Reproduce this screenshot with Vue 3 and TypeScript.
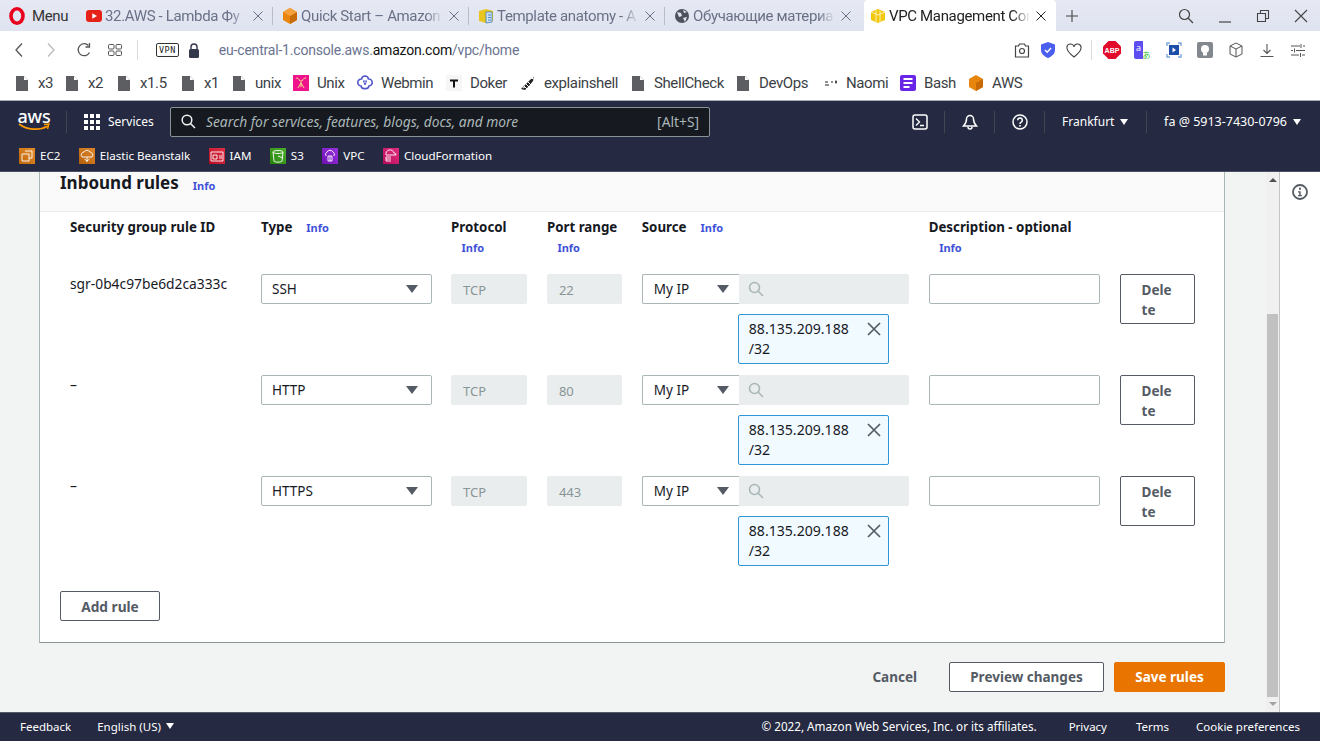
<template>
  <div class="page">
    <div class="tabbar">
      <div class="menu">
        <svg width="16" height="18" viewBox="0 0 16 18"><ellipse cx="8" cy="9" rx="6" ry="7.2" fill="none" stroke="#e8001c" stroke-width="3.6" /></svg>
        <span>Menu</span>
      </div>
      <div v-for="t in tabs" :key="t.title" class="tab" :class="{ active: t.active }">
        <svg class="tab-ico" width="16" height="16" viewBox="0 0 16 16">
          <template v-if="t.icon === 'yt'">
            <rect x="0" y="2" width="16" height="12" rx="3" fill="#e62117" />
            <path d="M6.3 5.2 11 8l-4.7 2.8z" fill="#fff" />
          </template>
          <template v-else-if="t.icon === 'cube'">
            <path d="M8 0 15 4v8l-7 4-7-4V4z" fill="#e8850c" />
            <path d="M8 8l7-4v8l-7 4z" fill="#c76a08" />
            <path d="M8 0 15 4 8 8 1 4z" fill="#f5a03a" />
          </template>
          <template v-else-if="t.icon === 'doc'">
            <path d="M1 3 8 1l7 2v10l-7 2-7-2z" fill="#e8c51e" />
            <path d="M8 4h6v10l-6 1z" fill="#cfe1f2" stroke="#3b7dbd" stroke-width=".8" />
            <path d="M10 7h3M10 9.500h3M10 12h3" stroke="#3b7dbd" stroke-width=".9" />
          </template>
          <template v-else-if="t.icon === 'globe'">
            <circle cx="8" cy="8" r="7" fill="#4d5260" />
            <path d="M3 4l4 1 1 3-3 1zM9 10l4-1-2 5zM9 2l4 2-3 1z" fill="#e3e7f2" />
          </template>
          <template v-else>
            <path d="M8 1 15 4v8l-7 3-7-3V4z" fill="#f2c80f" />
            <path d="M6 2.500v12.300M10 2.500v12.300M1 4l7 3 7-3" stroke="#fff6c4" stroke-width=".9" fill="none" />
          </template>
        </svg>
        <span class="tab-title">{{ t.title }}</span>
        <svg class="tab-x" width="10" height="10" viewBox="0 0 10 10"><path d="M.5.5l9 9M9.500.5l-9 9" stroke="currentColor" fill="none" /></svg>
      </div>
      <svg class="plus" width="12" height="12" viewBox="0 0 12 12"><path d="M6 0v12M0 6h12" stroke="#444" stroke-width="1.100" /></svg>
      <div class="win">
        <svg width="16" height="16" viewBox="0 0 16 16"><circle cx="6.500" cy="6.500" r="5" fill="none" stroke="#444" stroke-width="1.200" /><path d="M10 10l5 5" stroke="#444" stroke-width="1.200" /></svg>
        <svg width="14" height="14" viewBox="0 0 14 14"><path d="M1 13h12" stroke="#444" stroke-width="1.200" /></svg>
        <svg width="14" height="14" viewBox="0 0 14 14"><path d="M1.500 4.500h8v8h-8zM4.500 4.500v-3h8v8h-3" fill="none" stroke="#444" stroke-width="1.100" /></svg>
        <svg width="14" height="14" viewBox="0 0 14 14"><path d="M1 1l12 12M13 1 1 13" stroke="#444" stroke-width="1.100" /></svg>
      </div>
    </div>

    <div class="toolbar">
      <svg class="back" width="10" height="16" viewBox="0 0 10 16"><path d="M8 1.500 2 8l6 6.500" fill="none" stroke="#555" stroke-width="1.300" /></svg>
      <svg class="fwd" width="10" height="16" viewBox="0 0 10 16"><path d="M2 1.500 8 8l-6 6.500" fill="none" stroke="#bbb" stroke-width="1.300" /></svg>
      <svg class="reload" width="16" height="16" viewBox="0 0 16 16"><path d="M13.500 10.500A6 6 0 1 1 12.500 3.500" fill="none" stroke="#555" stroke-width="1.300" /><path d="M13.500 1v4h-4" fill="none" stroke="#555" stroke-width="1.300" /></svg>
      <svg class="apps" width="14" height="14" viewBox="0 0 14 14"><g fill="none" stroke="#555"><rect x=".5" y="1.500" width="5.500" height="4.500" rx="1" /><rect x="8" y="1.500" width="5.500" height="4.500" rx="1" /><rect x=".5" y="8" width="5.500" height="4.500" rx="1" /><rect x="8" y="8" width="5.500" height="4.500" rx="1" /></g></svg>
      <span class="sep"></span>
      <span class="vpn">VPN</span>
      <svg class="lock" width="12" height="15" viewBox="0 0 12 15"><path d="M3 6V4a3 3 0 0 1 6 0v2" fill="none" stroke="#33384a" stroke-width="1.400" /><rect x="1" y="6" width="10" height="9" rx="1.500" fill="#33384a" /></svg>
      <span class="url">eu-central-1.console.aws.<b>amazon.com</b>/vpc/home</span>
      <div class="tool-right">
        <span class="ti n"><svg width="16" height="15" viewBox="0 0 16 15"><path d="M1.500 3h3l1-2h5l1 2h3v11h-13z" fill="none" stroke="#444" stroke-width="1.200" /><circle cx="8" cy="8" r="2.500" fill="none" stroke="#444" stroke-width="1.200" /></svg></span>
        <span class="ti n"><svg width="14" height="16" viewBox="0 0 14 16"><path d="M7 0 14 2.500V8c0 4-3.500 6.500-7 8-3.500-1.500-7-4-7-8V2.500z" fill="#4a5ff0" /><path d="M4 8l2.200 2.200L10 6" fill="none" stroke="#fff" stroke-width="1.500" /></svg></span>
        <span class="ti n"><svg width="16" height="15" viewBox="0 0 16 15"><path d="M8 14C3 10 1 7.500 1 5a3.500 3.500 0 0 1 7-1 3.500 3.500 0 0 1 7 1c0 2.500-2 5-7 9z" fill="none" stroke="#444" stroke-width="1.100" /></svg></span>
        <span class="sep small"></span>
        <span class="ti"><svg width="18" height="18" viewBox="0 0 18 18"><path d="M5.500 0h7L18 5.500v7L12.500 18h-7L0 12.500v-7z" fill="#e30b2b" /><text x="9" y="11.800" text-anchor="middle" class="abp">ABP</text></svg></span>
        <span class="ti"><svg width="18" height="18" viewBox="0 0 18 18"><path d="M2 0h7v18H2a2 2 0 0 1-2-2V2a2 2 0 0 1 2-2z" fill="#5c4ef0" /><text x="4.500" y="10" text-anchor="middle" class="tr-a">a</text><text x="12.500" y="16.500" text-anchor="middle" class="tr-b">あ</text></svg></span>
        <span class="ti"><svg width="16" height="16" viewBox="0 0 16 16"><path d="M1 4V1h3M12 1h3v3M15 12v3h-3M4 15H1v-3" fill="none" stroke="#7ea7de" stroke-width="1.400" /><rect x="3" y="3" width="10" height="10" fill="#1e4fa8" /><path d="M6.500 5.500 10 8l-3.500 2.500z" fill="#fff" /></svg></span>
        <span class="ti"><svg width="16" height="16" viewBox="0 0 16 16"><rect width="16" height="16" rx="2" fill="#83878e" /><circle cx="8" cy="7" r="4" fill="#fff" /><rect x="6" y="10.500" width="4" height="3" fill="#fff" /></svg></span>
        <span class="ti"><svg width="14" height="16" viewBox="0 0 14 16"><path d="M7 1l6 3v8l-6 3-6-3V4zM1 4l6 3 6-3M7 7v8" fill="none" stroke="#555" /></svg></span>
        <span class="ti"><svg width="14" height="14" viewBox="0 0 14 14"><path d="M7 1v9M3.500 7 7 10.500 10.500 7M.5 13.500h13" fill="none" stroke="#555" stroke-width="1.100" /></svg></span>
        <span class="ti"><svg width="14" height="13" viewBox="0 0 14 13"><path d="M0 2h9M12 2h2M0 6.500h2M5 6.500h9M0 11h8M11 11h3M10 0v4M3.500 4.500v4M9.500 9v4" stroke="#555" fill="none" /></svg></span>
      </div>
    </div>

    <div class="bookmarks">
      <div v-for="b in bookmarks" :key="b.label" class="bm" :style="{ width: b.w + 'px' }">
        <svg width="16" height="16" viewBox="0 0 16 16">
          <template v-if="b.icon === 'doc'"><path d="M2 1h8l4 4v11H2z" fill="#5c5e62" /><path d="M10 1v4h4z" fill="#fff" /></template>
          <template v-else-if="b.icon === 'unix'"><rect width="16" height="16" fill="#f0148c" /><path d="M3 3c2 0 3 1 4 3M13 3c-2 0-3 1-4 3M8 5v7M8 8l-3 5M8 8l3 5" stroke="#f4e08c" fill="none" /></template>
          <template v-else-if="b.icon === 'webmin'"><path d="M8 1a3.500 3.500 0 0 1 3.400 3A3.500 3.500 0 0 1 12 11a3.500 3.500 0 0 1-4 2.500A3.500 3.500 0 0 1 4 11a3.500 3.500 0 0 1 .6-7A3.500 3.500 0 0 1 8 1z" fill="none" stroke="#5158cc" stroke-width="1.600" /><path d="M6 6l4 0M6.500 6 8 10l1.500-4" fill="none" stroke="#5158cc" /></template>
          <template v-else-if="b.icon === 'doker'"><rect width="16" height="16" fill="#f6f6f6" /><path d="M4 4.500h8v2H9v6H7v-6H4z" fill="#111" /></template>
          <template v-else-if="b.icon === 'shell'"><path d="M1 14 6 9l5-5 3-2-1 4-4 5-4 4z" fill="#222" /><path d="M4 11l3 3M6 9l3 3M8 7l3 3M3 13l2-1M11 3l3 1" stroke="#fff" /></template>
          <template v-else-if="b.icon === 'naomi'"><path d="M3 7h3M3 10h4M9 7h2M13 7h2M14 5.500v3" stroke="#222" stroke-width="1.200" /></template>
          <template v-else-if="b.icon === 'bash'"><rect width="16" height="16" rx="2" fill="#6a24e8" /><path d="M3.500 4h9M3.500 8h9M3.500 12h6" stroke="#fff" stroke-width="1.800" /></template>
          <template v-else><path d="M8 0 15 4v8l-7 4-7-4V4z" fill="#e8850c" /><path d="M8 8l7-4v8l-7 4z" fill="#c76a08" /></template>
        </svg>
        <span>{{ b.label }}</span>
      </div>
    </div>

    <header class="aws-nav">
      <div class="nav-top">
        <div class="logo">
          <span>aws</span>
          <svg width="32" height="9" viewBox="0 0 32 9"><path d="M1 1c8 6 20 7 29 2" fill="none" stroke="#f90" stroke-width="1.700" /><path d="M26 1.500l5-.5-1.500 5" fill="none" stroke="#f90" stroke-width="1.300" /></svg>
        </div>
        <span class="vline"></span>
        <div class="services">
          <svg width="16" height="16" viewBox="0 0 16 16" fill="#fff"><rect v-for="c in grid" :key="c.k" :x="c.x" :y="c.y" width="4" height="4" /></svg>
          <span>Services</span>
        </div>
        <div class="search">
          <svg width="15" height="15" viewBox="0 0 15 15"><circle cx="6" cy="6" r="4.800" fill="none" stroke="#f2f3f3" stroke-width="1.500" /><path d="M9.500 9.500 14 14" stroke="#f2f3f3" stroke-width="1.500" /></svg>
          <span class="ph">Search for services, features, blogs, docs, and more</span>
          <span class="hot">[Alt+S]</span>
        </div>
        <div class="nav-right">
          <div class="nav-ico-cell"><svg width="16" height="16" viewBox="0 0 16 16"><rect x="1" y="1" width="14" height="14" rx="2" fill="none" stroke="#fff" stroke-width="1.500" /><path d="M4 4.500 7.500 8 4 11.500M8 11.500h4" fill="none" stroke="#fff" stroke-width="1.300" /></svg></div>
          <div class="nav-ico-cell"><svg width="16" height="16" viewBox="0 0 16 16"><path d="M8 1.500a3.500 3.500 0 0 1 3.500 3.500c0 3 .5 4.500 3 7h-13c2.500-2.500 3-4 3-7A3.500 3.500 0 0 1 8 1.500z" fill="none" stroke="#fff" stroke-width="1.500" /><path d="M6 13a2 2 0 0 0 4 0" fill="none" stroke="#fff" stroke-width="1.500" /></svg></div>
          <div class="nav-ico-cell"><svg width="16" height="16" viewBox="0 0 16 16"><circle cx="8" cy="8" r="7" fill="none" stroke="#fff" stroke-width="1.500" /><path d="M5.700 6.200a2.300 2.300 0 1 1 3.500 2c-.9.500-1.200 1-1.200 1.800" fill="none" stroke="#fff" stroke-width="1.500" /><rect x="7.200" y="11" width="1.600" height="1.600" fill="#fff" /></svg></div>
          <div class="nav-txt region">Frankfurt<i class="caret"></i></div>
          <div class="nav-txt acct">fa @ 5913-7430-0796<i class="caret"></i></div>
        </div>
      </div>
      <div class="favs">
        <div v-for="(f, i) in favourites" :key="f.label" class="fav">
          <svg width="16" height="16" viewBox="0 0 16 16">
            <defs v-if="i === 0">
              <linearGradient id="fav-shade" x1="0" y1="1" x2="1" y2="0">
                <stop offset="0" stop-color="#000" stop-opacity=".18" />
                <stop offset="1" stop-color="#fff" stop-opacity=".12" />
              </linearGradient>
            </defs>
            <rect width="16" height="16" :fill="f.color" />
            <rect width="16" height="16" fill="url(#fav-shade)" />
            <path :d="f.d" fill="none" stroke="#fff" stroke-width=".9" />
          </svg>
          <span>{{ f.label }}</span>
        </div>
      </div>
    </header>

    <div class="body">
      <main class="scroller">
        <section class="card">
          <div class="card-head">
            <h2>Inbound rules</h2>
            <a class="info">Info</a>
          </div>
          <div class="card-body">
            <div class="rules-grid head">
              <div v-for="h in headers" :key="h.label" class="hd">{{ h.label }} <a v-if="h.info" class="info">Info</a></div>
            </div>
            <div v-for="r in rules" :key="r.type" class="rules-grid row">
              <div class="rule-id">{{ r.id }}</div>
              <div class="select">{{ r.type }}<i class="arrow"></i></div>
              <div class="field off"><span>TCP</span></div>
              <div class="field off"><span>{{ r.port }}</span></div>
              <div class="source">
                <div class="source-line">
                  <div class="select joined">My IP<i class="arrow"></i></div>
                  <div class="cidr">
                    <svg width="16" height="16" viewBox="0 0 16 16"><circle cx="6.500" cy="6.500" r="5" fill="none" stroke="#aab7b8" stroke-width="1.600" /><path d="M10 10l5 5" stroke="#aab7b8" stroke-width="1.600" /></svg>
                  </div>
                </div>
                <div class="chip">
                  <span class="chip-txt">88.135.209.188<wbr />/32</span>
                  <svg width="14" height="14" viewBox="0 0 14 14"><path d="M1 1l12 12M13 1 1 13" stroke="#545b64" stroke-width="1.700" /></svg>
                </div>
              </div>
              <div class="field"></div>
              <button class="btn del">Delete</button>
            </div>
            <button class="btn add">Add rule</button>
          </div>
        </section>
        <div class="actions">
          <span class="cancel">Cancel</span>
          <button class="btn preview">Preview changes</button>
          <button class="btn save">Save rules</button>
        </div>
      </main>
      <div class="track">
        <i class="up"></i>
        <div class="thumb"></div>
        <i class="down"></i>
      </div>
      <aside class="side">
        <svg width="16" height="16" viewBox="0 0 16 16"><circle cx="8" cy="8" r="7" fill="none" stroke="#545b64" stroke-width="1.800" /><rect x="7" y="3.700" width="2" height="2" fill="#545b64" /><path d="M6 7.200h2.700V11H10v1.200H6V11h1.200V8.400H6z" fill="#545b64" /></svg>
      </aside>
    </div>

    <footer class="foot">
      <span>Feedback</span>
      <span class="lang">English (US)<i class="caret"></i></span>
      <span class="copy">© 2022, Amazon Web Services, Inc. or its affiliates.</span>
      <span class="priv">Privacy</span>
      <span class="terms">Terms</span>
      <span class="cook">Cookie preferences</span>
    </footer>
  </div>
</template>

<script setup lang="ts">
interface Rule {
  id: string
  type: string
  port: string
}

const tabs = [
  { title: '32.AWS - Lambda Фу', icon: 'yt', active: false },
  { title: 'Quick Start – Amazon', icon: 'cube', active: false },
  { title: 'Template anatomy - A', icon: 'doc', active: false },
  { title: 'Обучающие материа', icon: 'globe', active: false },
  { title: 'VPC Management Con', icon: 'box', active: true }
]

const bookmarks = [
  { label: 'x3', icon: 'doc', w: 50 },
  { label: 'x2', icon: 'doc', w: 52 },
  { label: 'x1.5', icon: 'doc', w: 64 },
  { label: 'x1', icon: 'doc', w: 51 },
  { label: 'unix', icon: 'doc', w: 62 },
  { label: 'Unix', icon: 'unix', w: 64 },
  { label: 'Webmin', icon: 'webmin', w: 89 },
  { label: 'Doker', icon: 'doker', w: 74 },
  { label: 'explainshell', icon: 'shell', w: 110 },
  { label: 'ShellCheck', icon: 'doc', w: 105 },
  { label: 'DevOps', icon: 'doc', w: 87 },
  { label: 'Naomi', icon: 'naomi', w: 78 },
  { label: 'Bash', icon: 'bash', w: 68 },
  { label: 'AWS', icon: 'cube', w: 60 }
]

const grid = [0, 6, 12].flatMap((y) => [0, 6, 12].map((x) => ({ k: `${x}-${y}`, x, y })))

const favourites = [
  { label: 'EC2', color: '#e07a0a', d: 'M6 3h7v7h-3M3 6h7v7H3z' },
  { label: 'Elastic Beanstalk', color: '#d9730b', d: 'M3 9a3 3 0 0 1 2-5 3.500 3.500 0 0 1 6 0 3 3 0 0 1 2 5H3zM8 9v5M5.500 11 8 13l2.500-2' },
  { label: 'IAM', color: '#dc0f2b', d: 'M2 4h12v9H2zM4 7h4v4H4zM10 8h3M10 10h3' },
  { label: 'S3', color: '#2e9e0c', d: 'M3 4c0-2 10-2 10 0l-1 9c0 1.500-8 1.500-8 0zM3 4c0 2 10 2 10 0M8 8l5 2' },
  { label: 'VPC', color: '#8512d8', d: 'M4 8a3 3 0 0 1 1-4 3.500 3.500 0 0 1 6 0 3 3 0 0 1 1 4M6 8h4v5H6zM8 8v5' },
  { label: 'CloudFormation', color: '#dc0d6b', d: 'M3 7a4 4 0 0 1 8-2 2 2 0 0 1 2 2zM3 9h5M3 11h5M3 13h5M3 9v4' }
]

const headers = [
  { label: 'Security group rule ID', info: false },
  { label: 'Type', info: true },
  { label: 'Protocol', info: true },
  { label: 'Port range', info: true },
  { label: 'Source', info: true },
  { label: 'Description - optional', info: true },
  { label: '', info: false }
]

const rules: Rule[] = [
  { id: 'sgr-0b4c97be6d2ca333c', type: 'SSH', port: '22' },
  { id: '–', type: 'HTTP', port: '80' },
  { id: '–', type: 'HTTPS', port: '443' }
]
</script>

<style>
html,
body {
  margin: 0;
  overflow: hidden;
}
</style>

<style scoped>
.page {
  width: 1320px;
  height: 741px;
  display: flex;
  flex-direction: column;
  overflow: hidden;
  font-family: "Noto Sans", sans-serif;
  font-size: 13px;
  color: #16191f;
  background: #fff;
}

/* browser chrome */
.tabbar {
  height: 31px;
  flex: none;
  display: flex;
  align-items: center;
  background: linear-gradient(#e6e9f4, #dfe3ef);
  font-family: Roboto, sans-serif;
  font-size: 15px;
  letter-spacing: -0.35px;
  color: #6a7187;
}

.menu {
  width: 77px;
  flex: none;
  display: flex;
  align-items: center;
  gap: 7px;
  padding-left: 9px;
  box-sizing: border-box;
  color: #333;
}

.tab {
  width: 196px;
  height: 31px;
  flex: none;
  box-sizing: border-box;
  display: flex;
  align-items: center;
  padding: 0 9px 0 9px;
  position: relative;
}

.tab::after {
  content: "";
  position: absolute;
  right: 0;
  top: 7px;
  height: 18px;
  width: 1px;
  background: #b9bdca;
}

.tab:nth-child(5)::after,
.tab.active::after {
  display: none;
}

.tab.active {
  background: #fff;
  width: 192px;
  margin-left: 3px;
  border-radius: 4px 4px 0 0;
  padding: 0 9px 0 6px;
  color: #222;
}

.tab-ico {
  flex: none;
  margin-right: 3px;
}

.tab-title {
  flex: 1;
  min-width: 0;
  white-space: nowrap;
  -webkit-mask-image: linear-gradient(90deg, #000 88%, transparent);
  mask-image: linear-gradient(90deg, #000 88%, transparent);
}

.tab-x {
  flex: none;
  margin-left: 6px;
  margin-right: 1px;
}

.plus {
  margin-left: 10px;
  flex: none;
}

.win {
  margin-left: auto;
  display: flex;
  align-items: center;
  gap: 24px;
  padding-right: 12px;
}

.toolbar {
  height: 35px;
  flex: none;
  box-sizing: border-box;
  display: flex;
  align-items: center;
  padding: 3px 0 0 14px;
  background: #fff;
}

.back {
  margin-right: 22px;
  flex: none;
}

.fwd {
  margin-right: 20px;
  flex: none;
}

.reload {
  margin-right: 16px;
  flex: none;
}

.apps {
  margin-right: 15px;
  flex: none;
}

.sep {
  width: 1px;
  height: 20px;
  background: #d8dae0;
  margin-right: 18px;
  flex: none;
}

.sep.small {
  margin: 0 4px;
}

.vpn {
  border: 1px solid #333;
  border-radius: 2px;
  font-size: 8.500px;
  font-family: "DejaVu Sans Mono", monospace;
  line-height: 12px;
  padding: 0 2px;
  color: #222;
  letter-spacing: 0.5px;
}

.lock {
  margin-left: 9px;
  margin-right: 19px;
  flex: none;
}

.url {
  font-family: Roboto, sans-serif;
  font-size: 14px;
  letter-spacing: -0.2px;
  color: #6a7391;
}

.url b {
  font-weight: 400;
  color: #111;
}

.tool-right {
  margin-left: auto;
  display: flex;
  align-items: center;
  padding-right: 7px;
}

.ti {
  width: 31px;
  display: flex;
  align-items: center;
  justify-content: center;
}

.ti.n {
  width: 26px;
}

.abp {
  font: 700 7px "Liberation Sans", sans-serif;
  fill: #fff;
}

.tr-a {
  font: 400 9px "Noto Sans", sans-serif;
  fill: #fff;
}

.tr-b {
  font: 400 8px "Noto Sans CJK JP", sans-serif;
  fill: #2fc12f;
}

.bookmarks {
  height: 34px;
  flex: none;
  display: flex;
  align-items: center;
  padding: 0 0 1px 14px;
  box-sizing: border-box;
  background: #fff;
  font-family: Roboto, sans-serif;
  font-size: 15px;
  letter-spacing: -0.4px;
  color: #3c3f46;
}

.bm {
  flex: none;
  display: flex;
  align-items: center;
  gap: 8px;
}

/* aws console header */
.aws-nav {
  height: 72px;
  flex: none;
  background: #252a42;
  color: #fff;
  box-sizing: border-box;
  border-top: 1px solid #a9aeb6;
  border-bottom: 1px solid #4a4f63;
}

.nav-top {
  height: 41px;
  display: flex;
  align-items: center;
}

.logo {
  width: 32px;
  margin-left: 18px;
  display: flex;
  flex-direction: column;
  align-items: center;
  font: 500 18px/15px "Noto Sans", sans-serif;
  margin-top: -3px;
  letter-spacing: -0.2px;
}

.logo svg {
  margin-top: -1px;
}

.vline {
  width: 1px;
  height: 22px;
  background: #414750;
  margin-left: 16px;
}

.services {
  display: flex;
  align-items: center;
  gap: 8px;
  margin-left: 17px;
  width: 79px;
  flex: none;
  font-size: 12px;
}

.search {
  margin-left: 7px;
  width: 540px;
  height: 30px;
  box-sizing: border-box;
  background: #16191f;
  border: 1px solid #879596;
  border-radius: 2px;
  display: flex;
  align-items: center;
  padding: 0 10px;
  color: #aab7b8;
  font-size: 13.800px;
}

.ph {
  margin-left: 10px;
  font-style: italic;
  flex: 1;
}

.nav-right {
  display: flex;
  align-items: center;
  margin-left: auto;
  height: 22px;
}

.nav-ico-cell {
  width: 50px;
  height: 22px;
  box-sizing: border-box;
  display: flex;
  align-items: center;
  justify-content: center;
  border-right: 1px solid #414750;
}

.nav-txt {
  font-size: 12px;
  display: flex;
  align-items: center;
  height: 22px;
}

.region {
  width: 102px;
  box-sizing: border-box;
  padding-left: 17px;
  border-right: 1px solid #414750;
}

.acct {
  font-size: 12.500px;
  padding: 0 19px 0 17px;
}

.caret {
  width: 0;
  height: 0;
  margin-left: 6px;
  border-left: 4.500px solid transparent;
  border-right: 4.500px solid transparent;
  border-top: 6px solid #fff;
}

.favs {
  height: 30px;
  box-sizing: border-box;
  display: flex;
  align-items: center;
  padding: 0 0 3px 19px;
  gap: 18.400px;
  font-size: 11.600px;
}

.fav {
  display: flex;
  align-items: center;
  gap: 5px;
}

/* page */
.body {
  flex: 1;
  min-height: 0;
  display: flex;
  background: #f2f3f3;
}

.scroller {
  flex: 1;
  min-width: 0;
  padding: 0 41px 0 39px;
}

.card {
  background: #fff;
  border: 1px solid #aab7b8;
  border-top: 0;
  border-bottom-color: #879596;
  height: 471px;
  box-sizing: border-box;
}

.card-head {
  height: 40px;
  box-sizing: border-box;
  background: #fafafa;
  border-bottom: 1px solid #eaeded;
  display: flex;
  align-items: flex-start;
  padding: 1px 0 0 20px;
}

.card-head h2 {
  margin: 0 14px 0 0;
  font-size: 17px;
  font-weight: 700;
  line-height: 20px;
}

.info {
  color: #3f51d8;
  font-size: 11px;
  font-weight: 700;
  display: inline-block;
  margin-left: 10.500px;
}

.card-head .info {
  margin-left: 0;
  margin-top: 5px;
}

.card-body {
  padding: 0 30px 0 20px;
}

.rules-grid {
  display: grid;
  grid-template-columns: 171.500px 170.600px 76.300px 75.400px 267.400px 171.400px 75.400px;
  column-gap: 19.500px;
  margin-left: 10px;
}

.head {
  height: 62px;
  padding-top: 5px;
  box-sizing: border-box;
}

.hd {
  font-size: 13.300px;
  font-weight: 700;
  line-height: 20px;
}

.row {
  height: 90px;
  margin-bottom: 11px;
  align-items: start;
}

.rule-id {
  font-size: 13.800px;
  line-height: 20px;
}

.select {
  height: 30px;
  box-sizing: border-box;
  border: 1px solid #aab7b8;
  border-radius: 2px;
  background: #fff;
  display: flex;
  align-items: center;
  justify-content: space-between;
  padding: 0 13px 0 10px;
  font-size: 13.500px;
}

.arrow {
  width: 0;
  height: 0;
  border-left: 6px solid transparent;
  border-right: 6px solid transparent;
  border-top: 8px solid #545b64;
}

.field {
  height: 30px;
  box-sizing: border-box;
  border: 1px solid #aab7b8;
  border-radius: 2px;
  background: #fff;
}

.field.off {
  background: #eaeded;
  border-color: #eaeded;
  color: #879596;
  display: flex;
  align-items: center;
  padding: 2px 0 0 11px;
}

.source-line {
  display: flex;
  height: 30px;
}

.joined {
  width: 97px;
  flex: none;
  border-right: 0;
  border-radius: 2px 0 0 2px;
  padding: 0 10px 0 11px;
}

.cidr {
  flex: 1;
  background: #eaeded;
  border-radius: 0 2px 2px 0;
  display: flex;
  align-items: center;
  padding-left: 9px;
}

.chip {
  margin: 10px 0 0 96px;
  width: 151px;
  height: 50px;
  box-sizing: border-box;
  border: 1px solid #2e96d6;
  border-radius: 2px;
  background: #f1faff;
  display: flex;
  align-items: flex-start;
  justify-content: space-between;
  padding: 4px 7px 0 10px;
}

.chip-txt {
  width: 108px;
  font-size: 14.100px;
  line-height: 20px;
}

.chip svg {
  flex: none;
  margin-top: 3px;
}

.btn {
  font-family: inherit;
  font-size: 13.500px;
  font-weight: 700;
  color: #545b64;
  background: #fff;
  border: 1px solid #545b64;
  border-radius: 2px;
  box-sizing: border-box;
  cursor: pointer;
}

.del {
  height: 50px;
  padding: 1px 20px 0 21px;
  line-height: 20px;
  word-break: break-all;
  text-align: left;
}

.add {
  display: block;
  width: 100px;
  height: 30px;
  margin-top: 25px;
  font-size: 13.700px;
}

.actions {
  display: flex;
  align-items: center;
  justify-content: flex-end;
  margin-top: 19px;
}

.cancel {
  font-size: 13.500px;
  font-weight: 700;
  color: #545b64;
  margin-right: 32px;
}

.preview {
  width: 155px;
  height: 30px;
  margin-right: 10px;
}

.save {
  width: 111px;
  height: 30px;
  background: #e97500;
  border-color: #e97500;
  color: #fff;
}

.track {
  width: 13px;
  flex: none;
  background: #f0f0f0;
  display: flex;
  flex-direction: column;
  align-items: center;
}

.up,
.down {
  width: 0;
  height: 0;
  flex: none;
  border-left: 4px solid transparent;
  border-right: 4px solid transparent;
}

.up {
  margin-top: 6px;
  border-bottom: 4px solid #505050;
}

.down {
  margin-top: 5px;
  border-top: 4px solid #a3a3a3;
}

.thumb {
  width: 11px;
  height: 383px;
  margin-top: 132px;
  background: #c1c1c1;
  flex: none;
}

.side {
  width: 41px;
  flex: none;
  box-sizing: border-box;
  background: #fff;
  border-left: 1px solid #c4c4c4;
  display: flex;
  justify-content: center;
  padding-top: 12px;
}

.foot {
  height: 29px;
  flex: none;
  box-sizing: border-box;
  background: #252a42;
  border-top: 1px solid #545b64;
  color: #fff;
  font-size: 11.500px;
  display: flex;
  align-items: center;
  padding: 0 0 2px 20px;
}

.lang {
  display: flex;
  align-items: center;
  margin-left: 26px;
}

.lang .caret {
  margin-left: 5px;
}

.copy {
  margin-left: auto;
  font-size: 11.700px;
}

.priv {
  margin-left: 32px;
}

.terms {
  margin-left: 29px;
}

.cook {
  margin-left: 27px;
  margin-right: 20px;
}
</style>
